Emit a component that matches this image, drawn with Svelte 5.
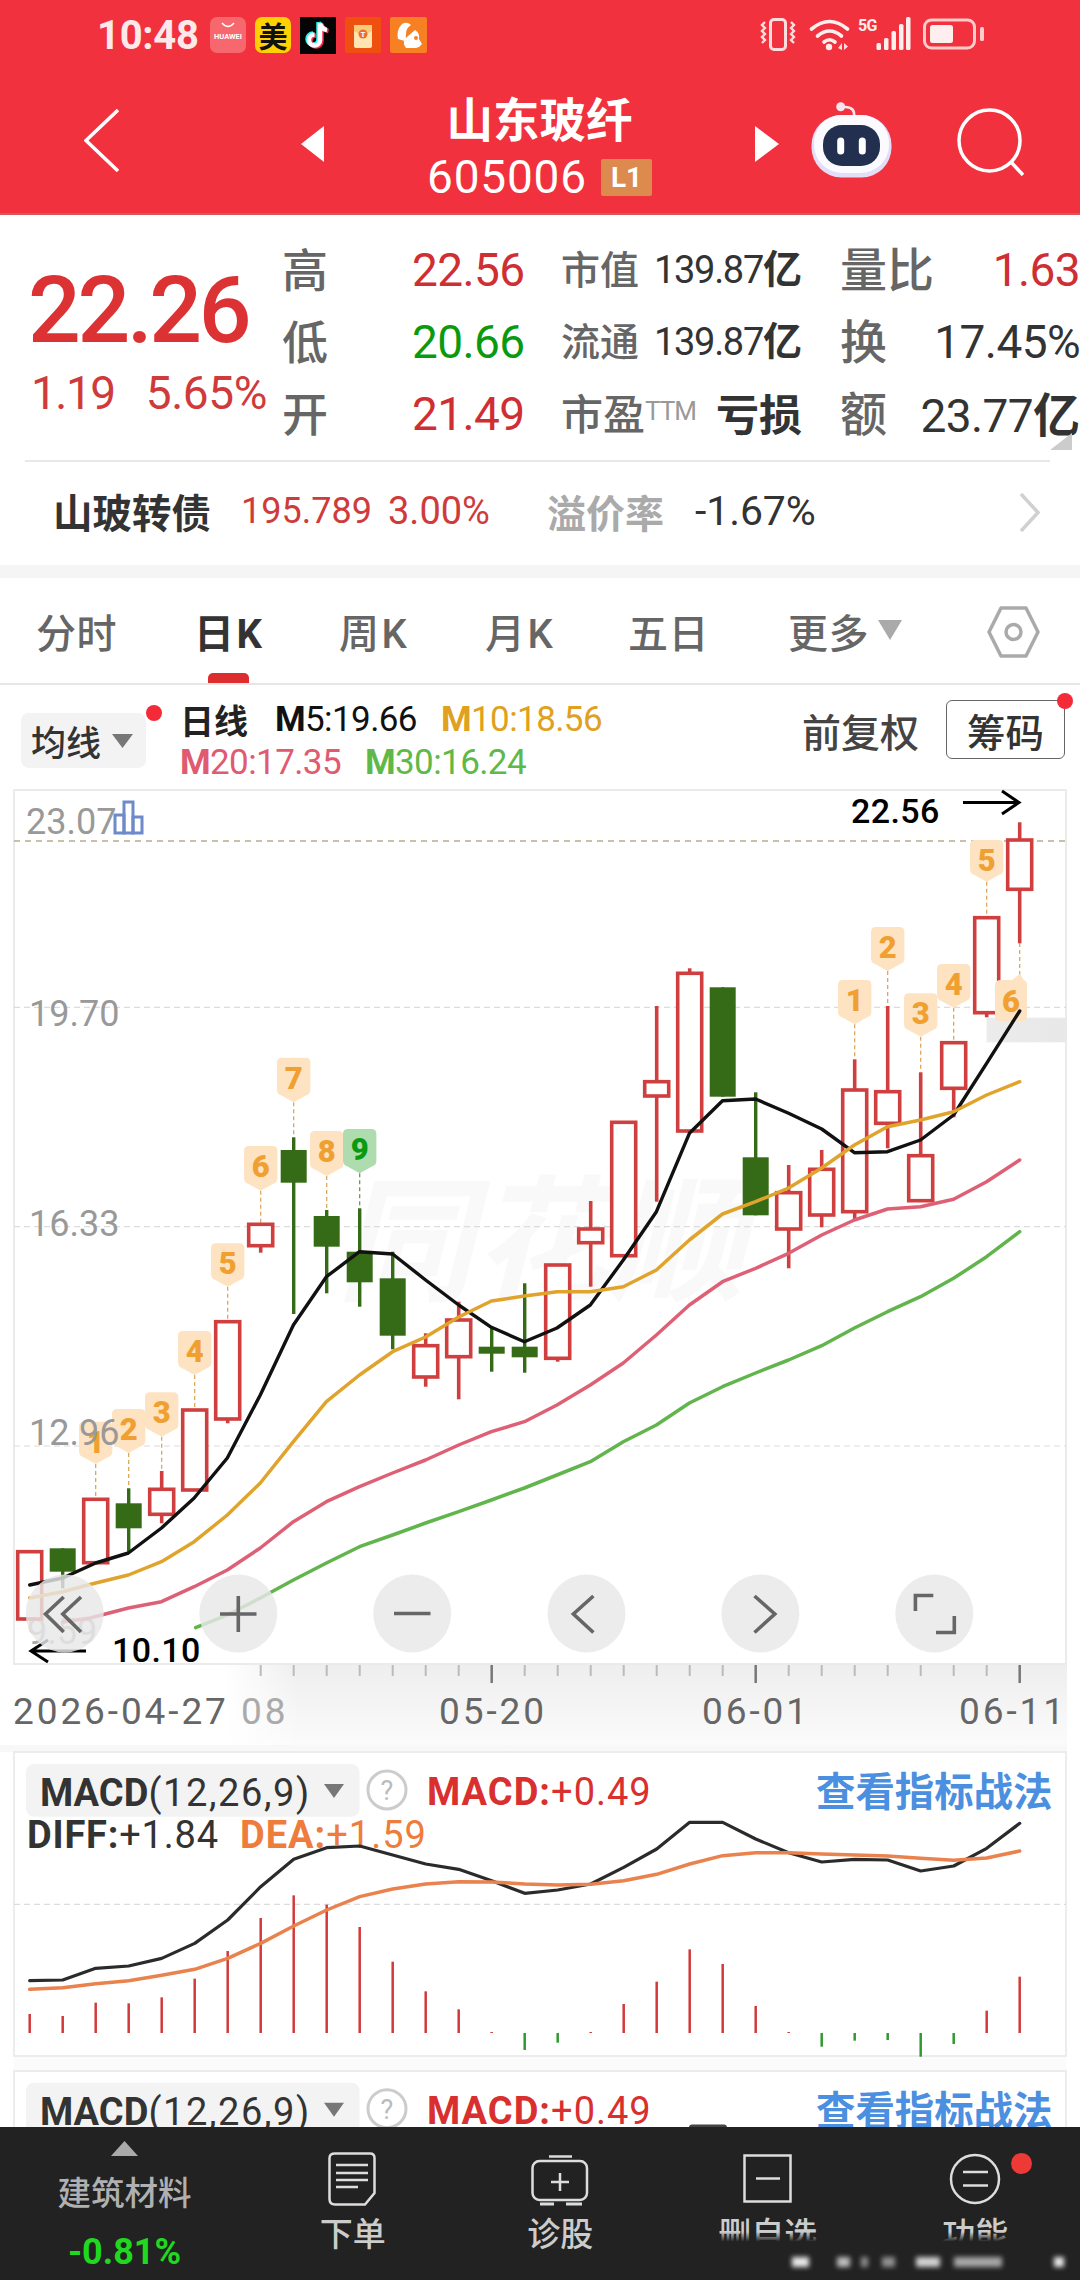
<script>
  const X = (i) => 29.7 + 33 * i;
  const candles = [
    ['r',1551.7,1551.7,1619,1619],['g',1548.3,1548.3,1571.7,1588.3],['r',1499.3,1499.3,1562.7,1562.7],['g',1488.3,1503.3,1528.3,1551.7],
    ['r',1471,1489.3,1514.3,1523.3],['r',1410,1410,1490,1490],['r',1321.7,1321.7,1419,1423.3],['r',1224.3,1224.3,1245.7,1252.7],
    ['g',1137.3,1150,1182.7,1314],['g',1210,1216,1246.7,1293.3],['g',1208.3,1251.7,1282.3,1306.7],['g',1251.7,1278.3,1335.7,1349.3],
    ['r',1333.3,1345.7,1377,1386.7],['r',1301.7,1320,1356.7,1399.3],['g',1326.7,1346.7,1353.7,1371.7],['g',1283.3,1346.7,1357.3,1372.7],
    ['r',1265,1265,1358.3,1361.7],['r',1201,1229,1242.7,1286.7],['r',1122.3,1122.3,1255.7,1256.7],['r',1006,1081.7,1096,1201.7],
    ['r',968.3,973.3,1131,1131],['g',987.3,987.3,1096.7,1096.7],['g',1092.3,1157.3,1215.3,1215.3],['r',1165,1192.7,1229,1268.3],
    ['r',1150,1169.3,1215,1227.3],['r',1059.3,1090,1211.7,1220],['r',1006,1091.7,1123.3,1148.3],['r',1072.3,1155.7,1200.7,1201.7],
    ['r',1042.7,1042.7,1088.3,1117.3],['r',917.7,917.7,1012.7,1017.3],['r',822.3,840,889.3,943.3]
  ];
  const badges = [
    [2,1421.7,1464,1499.3,'1'],[3,1409,1453,1488.3,'2'],[4,1392.3,1436.7,1471,'3'],[5,1331,1375,1410,'4'],[6,1243.3,1286.7,1321.7,'5'],
    [7,1146,1190.7,1224.3,'6'],[8,1057.7,1102.3,1137.3,'7'],[9,1131,1176,1210,'8'],[10,1129,1173.3,1208.3,'9'],
    [25,980,1024.3,1059.3,'1'],[26,927,971,1006,'2'],[27,993.3,1036.7,1072.3,'3'],[28,964,1007.7,1042.7,'4'],[29,840,881.7,917.7,'5']
  ];
  const badgePath = (cx, t, p) => {
    const l = cx - 16.7, r = cx + 16.7, b = p - 7;
    return `M${l + 5} ${t}H${r - 5}Q${r} ${t} ${r} ${t + 5}V${b - 6}Q${r} ${b - 1} ${r - 4} ${b}L${cx} ${p}L${l + 4} ${b}Q${l} ${b - 1} ${l} ${b - 6}V${t + 5}Q${l} ${t} ${l + 5} ${t}Z`;
  };
  const ma5 = '29.7,1585 62.7,1578 95.7,1563 128.4,1553 161.5,1528 194.2,1498 227.3,1458 260.3,1395 293.4,1325 326.4,1276.7 359.5,1251.7 392.6,1254 425.6,1280 458.7,1305 491.4,1327.3 524.4,1341.7 557,1328 590.3,1305 623.3,1260 656.4,1211.7 689.4,1133.3 722.5,1100.7 755.6,1099 788.6,1113.3 821.7,1129 854.4,1152.7 887.5,1151.7 920.5,1140 953.6,1115 986.6,1063.3 1019.7,1011';
  const ma10 = '29.7,1598 62.7,1591.7 95.7,1583 128.4,1575 161.5,1561.7 194.2,1541.7 227.3,1515 260.3,1483 293.4,1441.7 326.4,1401.7 359.5,1375 392.6,1351.7 425.6,1337 458.7,1317 491.4,1301 524.4,1296 557.2,1291.7 590.3,1291.7 623.3,1286.7 656.4,1270 689.4,1240 722.5,1214 755.6,1201.7 788.6,1188 821.7,1168 854.4,1145 887.5,1126.7 920.5,1120 953.6,1111.7 986.6,1095 1019.7,1081.7';
  const ma20 = '62.7,1622 90,1618 128.4,1608 161.5,1601.7 194.2,1586.7 227.3,1570 260.3,1548 293.4,1521.7 326.4,1501.7 359.5,1486.7 392.6,1473 425.6,1460 458.7,1445 491.4,1431.7 524.4,1421.7 557,1405 590.3,1385 623.3,1363 656.4,1335 689.4,1305 722.5,1281.7 755.6,1268.3 788.6,1253.3 821.7,1235 854.4,1220 887.5,1209 920.5,1206.7 953.6,1199.3 986.6,1181.7 1019.7,1160';
  const ma30 = '195.6,1627.7 227.3,1615 260.3,1598 293.4,1580 326.4,1563 359.5,1546.7 392.6,1535 425.6,1523 458.7,1511.7 491.4,1500 524.4,1488 557,1475 590.3,1461.7 623.3,1441.7 656.4,1425 689.4,1403 722.5,1386.7 755.6,1373 788.6,1360 821.7,1345.7 854.4,1328 887.5,1311.7 920.5,1296.7 953.6,1278.3 986.6,1256.7 1019.7,1231.7';
  const btns = [64.7, 238.3, 412.2, 586.5, 760.4, 934.3];
  const ticks = Array.from({ length: 24 }, (_, k) => k + 7);
  const dy = (z) => 1740 + z / 3;
  const diff = [722,720,685,678,655,610,540,440,358,323,318,345,372,388,422,460,450,432,382,327,247,247,297,338,366,358,360,393,378,325,250];
  const dea = [748,743,731,722,706,688,655,610,558,510,470,447,432,425,426,432,435,433,422,403,372,347,338,338,342,345,348,355,361,354,333];
  const pts = (a) => a.map((z, i) => `${X(i)},${dy(z)}`).join(' ');
  const hist = [['r',822],['r',828],['r',788],['r',790],['r',772],['r',716],['r',633],['r',534],['r',466],['r',494],['r',561],['r',665],['r',754],['r',808],['r',876],
    ['g',2050],['g',2042.7],['r',876],['r',792],['r',725],['r',628],['r',672],['r',798],['r',876],['g',2046.7],['g',2040.7],['g',2040],['g',2056.7],['g',2044],['r',812],['r',710]];
  const smudges = [[792,17,.9],[837,13,.7],[861,7,.5],[882,13,.5],[916,24,.8],[954,48,.6],[1054,10,.9]];
</script>

{#snippet macdHead(off)}
  <rect class="pill" x="26" y={1764 + off} width="333.5" height="52.7" rx="8" />
  <text class="mh" x="40" y={1806 + off}><tspan class="b">MACD</tspan><tspan class="par">(12,26,9)</tspan></text>
  <polygon class="tri" points="{324},{1784 + off} {344},{1784 + off} {334},{1798 + off}" />
  <circle class="help" cx="387" cy={1790 + off} r="19" />
  <text class="helpq" x="387" y={1800 + off}>?</text>
  <text class="mv" x="427" y={1805 + off}><tspan class="b">MACD:</tspan>+0.49</text>
  <text class="zhan" x="816" y={1806 + off}>查看指标战法</text>
{/snippet}

<div class="page">
  <header class="top">
    <div class="status">
      <span class="time">10:48</span>
      <div class="apps">
        <div class="app huawei">
          <svg viewBox="0 0 36 35" width="36" height="35"><path d="M12 6q6 7 12 0" fill="none" stroke="#fff" stroke-width="1.3" /></svg>
          <span>HUAWEI</span>
        </div>
        <div class="app mei">美</div>
        <div class="app tik">
          <svg viewBox="0 0 36 36" width="36" height="36">
            <g fill="none" stroke-width="4.5">
              <path d="M20 6v17a5.5 5.5 0 1 1-5.5-5.5M20 6c.8 4 3.6 6.5 7 7" stroke="#25f4ee" transform="translate(-1.5 -1)" />
              <path d="M20 6v17a5.5 5.5 0 1 1-5.5-5.5M20 6c.8 4 3.6 6.5 7 7" stroke="#fe2c55" transform="translate(1.5 1)" />
              <path d="M20 6v17a5.5 5.5 0 1 1-5.5-5.5M20 6c.8 4 3.6 6.5 7 7" stroke="#fff" />
            </g>
          </svg>
        </div>
        <div class="app env">
          <svg viewBox="0 0 36 36" width="36" height="36">
            <rect x="9" y="8" width="18" height="23" rx="2" fill="#ffe6b0" />
            <path d="M9 8h18v6q-9 7-18 0z" fill="#fbc97a" />
            <circle cx="18" cy="17" r="4.5" fill="#e8722a" />
            <text x="18" y="20" class="envt">T</text>
          </svg>
        </div>
        <div class="app org">
          <svg viewBox="0 0 37 36" width="37" height="36">
            <path d="M8 22q-2-9 4-15 5-3 9 1-5 3-5 9-1 5 2 8z" fill="#fff" />
            <path d="M16 31q-5-6 1-11l8-7q5 3 4 9l3 5q-2 3-6 4z" fill="#fff" />
            <circle cx="26" cy="21" r="2" fill="#f78022" />
          </svg>
        </div>
      </div>
      <svg class="sys" viewBox="755 15 235 45" width="235" height="45">
        <rect x="770.5" y="21.5" width="15" height="30" rx="3.5" fill="none" stroke="#fdd" stroke-width="3" />
        <path d="M765 24l-3 3 3 3-3 3 3 3-3 3 3 3-3 3M791 24l3 3-3 3 3 3-3 3 3 3-3 3 3 3" fill="none" stroke="#fdd" stroke-width="2.4" />
        <g fill="none" stroke="#fee" stroke-linecap="round">
          <path d="M811.5 31q18-15 36 0" stroke-width="3.6" />
          <path d="M817.5 38q12-10 24 0" stroke-width="3.6" />
          <path d="M824 44q5.500-4.500 11 0" stroke-width="3.6" />
        </g>
        <circle cx="829" cy="49" r="3.200" fill="#fee" />
        <path d="M838 50l4-5v7M844 45v7l4-3.500z" fill="#fdd" />
        <text class="fiveg" x="858" y="33">5G</text>
        <g fill="#fee">
          <rect x="876.500" y="45" width="4.500" height="7" rx="1.500" /><rect x="884" y="40" width="4.500" height="12" rx="1.500" />
          <rect x="891.500" y="33" width="4.500" height="19" rx="1.500" /><rect x="899" y="26" width="4.500" height="26" rx="1.500" /><rect x="906" y="19" width="4.500" height="33" rx="1.500" />
        </g>
        <rect x="924.500" y="22" width="50" height="28" rx="7" fill="none" stroke="#fcc" stroke-width="3" />
        <rect x="930" y="27" width="23" height="18" rx="2.500" fill="#fee" />
        <rect x="980" y="29" width="4" height="14" rx="1.500" fill="#fcc" />
      </svg>
    </div>
    <nav class="nav">
      <svg class="back" viewBox="0 0 35 63" width="35" height="63"><path d="M34 1L2 31.5L34 62" fill="none" stroke="#fff" stroke-width="3.5" /></svg>
      <svg class="prev" viewBox="0 0 23 36" width="23" height="36"><polygon points="23,0 0,18 23,36" fill="#fff" /></svg>
      <div class="title">
        <div class="name">山东玻纤</div>
        <div class="code"><span>605006</span><b>L1</b></div>
      </div>
      <svg class="next" viewBox="0 0 24 36" width="24" height="36"><polygon points="0,0 24,18 0,36" fill="#fff" /></svg>
      <svg class="robot" viewBox="811 100 82 80" width="82" height="80">
        <path d="M855 116q1-9-9-9" fill="none" stroke="#f6e6f0" stroke-width="2.600" />
        <circle cx="841.700" cy="106.700" r="4.500" fill="#f7e4ee" />
        <rect x="812.500" y="115" width="80" height="62.500" rx="30" fill="#e2def8" />
        <rect x="815" y="115" width="75" height="58" rx="28" fill="#fafaff" />
        <rect x="824" y="125" width="57" height="41" rx="19" fill="#232f4e" />
        <rect x="838.200" y="137.500" width="7" height="17" rx="3.500" fill="#fff" />
        <rect x="859.800" y="137.500" width="7" height="17" rx="3.500" fill="#fff" />
      </svg>
      <svg class="search" viewBox="958 108 68 68" width="68" height="68">
        <circle cx="990.500" cy="140.500" r="30.500" fill="none" stroke="#fff" stroke-width="3.500" />
        <path d="M1012 162L1024 175" stroke="#fff" stroke-width="3.500" />
      </svg>
    </nav>
  </header>

  <section class="quote">
    <div class="grid">
      <div class="left">
        <div class="price">22.26</div>
        <div class="chg"><span>1.19</span><span>5.65%</span></div>
      </div>
      <div class="lab">高</div><div class="val up">22.56</div>
      <div class="cell"><span class="k">市值</span><span class="nb">139.87<b>亿</b></span></div>
      <div class="cell wide"><span class="k2">量比</span><span class="val up">1.63</span></div>

      <div class="lab">低</div><div class="val dn">20.66</div>
      <div class="cell"><span class="k">流通</span><span class="nb">139.87<b>亿</b></span></div>
      <div class="cell wide"><span class="k2">换</span><span class="val dark">17.45%</span></div>

      <div class="lab">开</div><div class="val up">21.49</div>
      <div class="cell"><span class="k k3">市盈<small>TTM</small></span><b class="loss">亏损</b></div>
      <div class="cell wide"><span class="k2">额</span><span class="val dark">23.77<b>亿</b></span></div>
    </div>
    <svg class="corner" viewBox="0 0 22 17" width="22" height="17"><polygon points="0,17 22,17 22,0" fill="#ccc" /></svg>
    <div class="sep"></div>
    <div class="bond">
      <span class="bname">山玻转债</span>
      <span class="bnum">195.789</span>
      <span class="bpct">3.00%</span>
      <span class="bk">溢价率</span>
      <span class="bv">-1.67%</span>
      <svg class="chev" viewBox="0 0 21 39" width="21" height="39"><path d="M2 1L19 19.5L2 38" fill="none" stroke="#d0d0d0" stroke-width="3.500" /></svg>
    </div>
  </section>

  <div class="gap"></div>

  <section class="tabs">
    <span class="tab t1">分时</span>
    <span class="tab on kk">日K</span>
    <span class="tab kk">周K</span>
    <span class="tab kk">月K</span>
    <span class="tab">五日</span>
    <span class="tab">更多</span>
    <svg class="more" viewBox="0 0 24 20" width="24" height="20"><polygon points="0,0 24,0 12,20" fill="#aaa" /></svg>
    <svg class="hex" viewBox="0 0 53 52" width="53" height="52">
      <polygon points="14,2 39,2 51,26 39,50 14,50 2,26" fill="none" stroke="#aaa" stroke-width="3.500" stroke-linejoin="round" />
      <circle cx="26.500" cy="26" r="7.500" fill="none" stroke="#aaa" stroke-width="3.500" />
    </svg>
    <i class="under"></i>
  </section>

  <section class="mahead">
    <div class="ma-pill"><span>均线</span><svg viewBox="0 0 21 14" width="21" height="14"><polygon points="0,0 21,0 10.500,14" fill="#777" /></svg><i class="dot d1"></i></div>
    <div class="ma-vals">
      <div class="ma-row r1"><b class="rx">日线</b><span class="c0"><b>M</b>5:19.66</span><span class="c1"><b>M</b>10:18.56</span></div>
      <div class="ma-row r2"><span class="c2"><b>M</b>20:17.35</span><span class="c3"><b>M</b>30:16.24</span></div>
    </div>
    <span class="fq">前复权</span>
    <div class="chip">筹码<i class="dot d2"></i></div>
  </section>

  <svg class="chart" viewBox="0 789 1080 956" width="1080" height="956">
    <defs>
      <linearGradient id="band" x1="0" y1="0" x2="0" y2="1"><stop offset="0" stop-color="#eeeeee" /><stop offset="1" stop-color="#fbfbfb" /></linearGradient>
      <linearGradient id="whiteL" x1="0" y1="0" x2="1" y2="0"><stop offset=".75" stop-color="#fff" /><stop offset="1" stop-color="#fff" stop-opacity="0" /></linearGradient>
      <linearGradient id="greyR" x1="0" y1="0" x2="1" y2="0"><stop offset="0" stop-color="#e8e8e8" stop-opacity=".85" /><stop offset="1" stop-color="#e8e8e8" /></linearGradient>
    </defs>
    <rect x="0" y="1664" width="1067" height="81" fill="url(#band)" />
    <rect x="0" y="1664" width="300" height="81" fill="url(#whiteL)" />
    <rect x="14" y="790" width="1052" height="874" fill="#fff" stroke="#ebebeb" stroke-width="2" />
    <text class="wm" x="337" y="1290">同花顺</text>
    <line x1="14" y1="1007.3" x2="1066" y2="1007.3" class="grid-l" />
    <line x1="14" y1="1226.7" x2="1066" y2="1226.7" class="grid-l" />
    <line x1="14" y1="1446" x2="1066" y2="1446" class="grid-l" />
    <line x1="14" y1="841" x2="1066" y2="841" class="grid-top" />
    <g fill="none" stroke="#6f8acb" stroke-width="3">
      <rect x="115" y="815" width="9" height="18" /><rect x="124" y="802" width="9" height="31" /><rect x="133" y="817" width="9" height="16" />
    </g>
    <rect x="986.600" y="1017.700" width="80" height="24.600" fill="url(#greyR)" />

    {#each badges as b}
      <line x1={X(b[0])} x2={X(b[0])} y1={b[2]} y2={b[3]} class={b[0] === 10 ? 'dash dg' : 'dash'} />
      <path d={badgePath(X(b[0]), b[1], b[2])} class={b[0] === 10 ? 'bd bg' : 'bd'} />
      <text x={X(b[0])} y={b[1] + 31} class={b[0] === 10 ? 'bn gn' : 'bn'}>{b[4]}</text>
    {/each}
    <line x1="1019.700" x2="1019.700" y1="943" y2="982" class="dash" />

    <text class="ax" x="26" y="834">23.07</text>
    <text class="ax" x="29" y="1026">19.70</text>
    <text class="ax" x="29" y="1235.500">16.33</text>
    <text class="ax" x="29" y="1445">12.96</text>
    <text class="ax pale" x="27" y="1644">9.59</text>

    {#each candles as c, i}
      {#if c[0] === 'r'}
        <line x1={X(i)} x2={X(i)} y1={c[1]} y2={c[2]} class="wr" />
        <line x1={X(i)} x2={X(i)} y1={c[3]} y2={c[4]} class="wr" />
        <rect x={X(i) - 12} y={c[2]} width="24" height={c[3] - c[2]} class="br" />
      {:else}
        <line x1={X(i)} x2={X(i)} y1={c[1]} y2={c[4]} class="wg" />
        <rect x={X(i) - 13} y={c[2]} width="26" height={c[3] - c[2]} class="bgr" />
      {/if}
    {/each}

    <path d="M1001 980H1022Q1027 980 1027 985V1016Q1027 1021 1022 1021H1000Q995 1021 995 1016V985Q995 980 1001 980Z" class="bd" />
    <path d="M1012 980L1019.700 974L1024 980Z" class="bd" />
    <text x="1011" y="1012" class="bn">6</text>

    <polyline points={ma20} class="l pink" />
    <polyline points={ma30} class="l green" />
    <polyline points={ma5} class="l black" />
    <polyline points={ma10} class="l gold" />

    <text class="hi" x="851" y="822.500">22.56</text>
    <path d="M963 802.500H1018M1002 791L1019 802.500L1002 814" fill="none" stroke="#000" stroke-width="3" />
    <text class="hi" x="112" y="1661.500">10.10</text>
    <path d="M86 1651H31M48 1640L31 1651L48 1662" fill="none" stroke="#000" stroke-width="3" />

    {#each btns as x}
      <circle cx={x} cy="1613.500" r="39" class="cb" />
    {/each}
    <g fill="none" stroke="#666" stroke-width="3.600">
      <path d="M63.700 1597L45.500 1614L63.700 1632M81 1597L62.800 1614L81 1632" />
      <path d="M220 1614H256.500M238.300 1596V1632" />
      <path d="M394 1613.500H430.500" />
      <path d="M593.400 1596L573.400 1614L593.400 1632.500" />
      <path d="M754.500 1596L774.800 1614L754.500 1632.500" />
      <path d="M915.400 1611V1595.500H933.300M936 1632.500H954.300V1616" />
    </g>

    {#each ticks as k}
      <line x1={X(k)} x2={X(k)} y1="1665" y2={k === 14 || k === 22 || k === 30 ? 1683 : 1676} class={k === 14 || k === 22 || k === 30 ? 'tk big' : 'tk'} />
    {/each}
    <text class="dt" x="13" y="1724">2026-04-27</text>
    <text class="dt dt08" x="241" y="1724">08</text>
    <text class="dt" x="439" y="1724">05-20</text>
    <text class="dt" x="702" y="1724">06-01</text>
    <text class="dt" x="959" y="1724">06-11</text>
  </svg>

  <svg class="macd" viewBox="0 1745 1080 382" width="1080" height="382">
    <rect x="0" y="1745" width="1080" height="382" fill="#fff" />
    <rect x="0" y="1745" width="1067" height="7" fill="#f8f8f8" />
    <rect x="14" y="1752" width="1052" height="304" fill="#fff" stroke="#ececec" stroke-width="2" />
    <rect x="14" y="2057" width="1052" height="13" fill="#fbfbfb" />
    <rect x="14" y="2071" width="1052" height="80" fill="#fff" stroke="#ececec" stroke-width="2" />
    <line x1="14" x2="1066" y1="1904.300" y2="1904.300" class="grid-l" />
    {@render macdHead(0)}
    <text class="df" x="27" y="1848"><tspan class="b">DIFF:</tspan>+1.84</text>
    <text class="de" x="240" y="1848"><tspan class="b">DEA:</tspan>+1.59</text>
    {#each hist as h, i}
      {#if h[0] === 'r'}
        <line x1={X(i)} x2={X(i)} y1={dy(h[1])} y2="2033" class="hr" />
      {:else}
        <line x1={X(i)} x2={X(i)} y1="2033" y2={h[1]} class="hg" />
      {/if}
    {/each}
    <polyline points={pts(diff)} class="l dfl" />
    <polyline points={pts(dea)} class="l del" />
    {@render macdHead(318.7)}
    <rect x="689" y="2124.500" width="38" height="6" rx="3" fill="#444" />
  </svg>

  <footer class="bar">
    <div class="it first">
      <svg viewBox="0 0 27 15" width="27" height="15"><polygon points="13.500,0 27,15 0,15" fill="#aaa" /></svg>
      <span class="sect">建筑材料</span>
      <span class="pctg">-0.81%</span>
    </div>
    <div class="it">
      <svg viewBox="320 2146 66 64" width="66" height="64" fill="none" stroke="#ddd" stroke-width="2.500">
        <path d="M335 2153.500H370Q374.500 2153.500 374.500 2158V2193L365 2204.500H335Q329.500 2204.500 329.500 2199V2158Q329.500 2153.500 335 2153.500Z" />
        <path d="M336 2165H368M336 2173H368M336 2180H368M336 2187H358" />
      </svg>
      <span class="ll">下单</span>
    </div>
    <div class="it">
      <svg viewBox="527 2146 66 64" width="66" height="64" fill="none" stroke="#ddd" stroke-width="2.500">
        <path d="M549 2156.500H572" />
        <rect x="532.500" y="2161" width="54.500" height="39" rx="7" />
        <path d="M560 2173V2191M551 2182H569" />
        <path d="M540 2204H554M566 2204H582" stroke-width="3" />
      </svg>
      <span class="ll">诊股</span>
    </div>
    <div class="it">
      <svg viewBox="735 2146 66 64" width="66" height="64" fill="none" stroke="#ddd" stroke-width="2.500">
        <rect x="744.500" y="2155.500" width="46" height="46" />
        <path d="M756 2178.500H780" />
      </svg>
      <span class="ll">删自选</span>
    </div>
    <div class="it">
      <svg viewBox="943 2146 66 64" width="66" height="64" fill="none" stroke="#ddd" stroke-width="2.500">
        <circle cx="976" cy="2179" r="24" />
        <path d="M964 2172H989M964 2185.500H989" />
      </svg>
      <span class="ll">功能</span>
      <i class="fdot"></i>
    </div>
    <div class="blur"></div>
    <svg class="smudge" viewBox="780 2250 300 30" width="300" height="30">
      {#each smudges as s}
        <rect x={s[0]} y="2257" width={s[1]} height="10" fill="#fff" opacity={s[2]} />
      {/each}
    </svg>
  </footer>
</div>

<style>
  :global(body) { margin: 0; background: #fff; overflow: hidden; }
  .page { width: 1080px; height: 2280px; overflow: hidden; position: relative; background: #fff; font-family: Roboto, "Noto Sans CJK SC", sans-serif; }
  svg { display: block; }
  .top { height: 215px; box-sizing: border-box; background: #f1313d; border-bottom: 2px solid #d9545b; color: #fff; }
  .status { height: 70px; display: flex; align-items: center; padding-left: 97px; position: relative; }
  .time { font-size: 40px; font-weight: 700; width: 113px; letter-spacing: -.3px; color: #fde9ea; }
  .apps { display: flex; gap: 9px; }
  .app { width: 36px; height: 36px; display: flex; align-items: center; justify-content: center; border-radius: 3px; position: relative; overflow: hidden; }
  .huawei { background: #f6686e; border-radius: 7px; }
  .huawei svg { position: absolute; top: 0; left: 0; }
  .huawei span { font-size: 7.500px; font-weight: 700; color: #fff; margin-top: 4px; }
  .mei { background: #ffd100; color: #111; font-size: 29px; line-height: 36px; font-weight: 700; border-radius: 7px; font-family: "Noto Sans CJK SC", sans-serif; }
  .tik { background: #050505; border-radius: 0; height: 37px; }
  .env { background: #f0500f; border-radius: 2px; }
  .envt { font-size: 8px; font-weight: 700; fill: #fff; text-anchor: middle; }
  .org { background: #f78022; width: 37px; border-radius: 2px; }
  .sys { margin-left: auto; margin-right: 90px; }
  .fiveg { font-size: 16px; font-weight: 700; fill: #fee; letter-spacing: -.8px; }
  .nav { height: 143px; display: flex; align-items: flex-start; padding-left: 84px; }
  .back { margin-top: 39px; }
  .prev { margin-left: 182px; margin-top: 56px; }
  .next { margin-top: 56px; }
  .title { width: 431px; display: flex; flex-direction: column; align-items: center; }
  .name { font-size: 46.500px; font-weight: 700; line-height: 50px; margin-top: 22px; font-family: "Noto Sans CJK SC", sans-serif; }
  .code { display: flex; align-items: center; margin-top: 16px; height: 38px; }
  .code span { font-size: 46px; letter-spacing: .8px; line-height: 38px; width: 174px; }
  .code b { width: 51px; height: 37px; background: #dd8a4e; border-radius: 2px; font-size: 28px; line-height: 37px; text-align: center; }
  .robot { margin-left: 31px; margin-top: 30px; }
  .search { margin-left: 65px; margin-top: 38px; }

  .quote { height: 350px; position: relative; }
  .grid { display: grid; grid-template-columns: 253px 128px 110px 280px 278px; grid-template-rows: repeat(3, 72px); padding: 19px 0 0 31px; position: relative; }
  .left { grid-row: 1 / 4; position: relative; }
  .price { font-size: 93px; letter-spacing: -3.400px; color: #dc3234; line-height: 93px; margin-top: 30px; font-weight: 500; margin-left: -3px; }
  .chg { display: flex; gap: 31px; font-size: 46px; color: #cf3b3b; margin-top: 11px; line-height: 50px; letter-spacing: -.4px; }
  .chg span:first-child { letter-spacing: -1.500px; }
  .lab { font-size: 46px; color: #666; font-weight: 500; line-height: 66px; margin-left: -2px; font-family: "Noto Sans CJK SC", sans-serif; }
  .val { font-size: 46px; line-height: 72px; letter-spacing: -.6px; white-space: nowrap; }
  .up { color: #cf2f33; } .dn { color: #0a9a10; } .dark { color: #333; }
  .cell { display: flex; justify-content: space-between; align-items: center; margin-left: 39px; line-height: 72px; height: 72px; }
  .wide { margin-left: 38px; }
  .k { font-size: 39px; line-height: 66px; margin-bottom: 6px; color: #666; font-family: "Noto Sans CJK SC", sans-serif; font-weight: 500; white-space: nowrap; }
  .k3 { font-size: 42px; }
  .k3 small { font-size: 26px; color: #999; letter-spacing: -1px; vertical-align: 10px; font-family: Roboto, sans-serif; font-weight: 400; }
  .k2 { font-size: 47px; line-height: 66px; margin-bottom: 6px; color: #666; font-weight: 500; font-family: "Noto Sans CJK SC", sans-serif; }
  .nb { font-size: 38px; line-height: 68px; margin-bottom: 4px; letter-spacing: -1.300px; color: #333; white-space: nowrap; }
  .nb b { font-size: 39px; letter-spacing: 0; font-family: "Noto Sans CJK SC", sans-serif; }
  .val b { font-size: 47px; letter-spacing: 0; font-family: "Noto Sans CJK SC", sans-serif; }
  .loss { font-size: 43px; line-height: 68px; margin-bottom: 4px; color: #333; font-family: "Noto Sans CJK SC", sans-serif; }
  .corner { position: absolute; right: 8px; top: 218px; }
  .sep { margin: 10px 30px 0 25px; height: 2px; background: #e8e8e8; }
  .bond { height: 102px; box-sizing: border-box; padding-bottom: 5px; display: flex; align-items: center; padding-left: 53px; position: relative; }
  .bname { font-size: 39.500px; font-weight: 700; color: #333; font-family: "Noto Sans CJK SC", sans-serif; width: 188px; }
  .bnum { font-size: 36px; color: #cf3b3b; width: 147px; }
  .bpct { font-size: 38px; color: #cf3b3b; width: 159px; }
  .bk { font-size: 39px; color: #aaa; font-weight: 700; font-family: "Noto Sans CJK SC", sans-serif; width: 148px; }
  .bv { font-size: 41px; color: #333; letter-spacing: -.1px; }
  .chev { position: absolute; left: 1019px; top: 31px; }
  .gap { height: 13px; background: #f5f5f5; }

  .tabs { height: 107px; box-sizing: border-box; border-bottom: 2px solid #e6e6e6; display: grid; grid-template-columns: 36px 158px 145px 146px 143px 160px 90px 97px 53px; align-items: center; position: relative; }
  .tab { font-size: 40px; color: #666; font-weight: 500; font-family: Roboto, "Noto Sans CJK SC", sans-serif; white-space: nowrap; letter-spacing: .6px; }
  .kk { letter-spacing: 2.500px; }
  .t1 { grid-column: 2; }
  .on { color: #333; font-weight: 700; }
  .more { grid-column: 8; margin-top: -1px; }
  .hex { position: absolute; left: 987px; top: 28px; }
  .under { position: absolute; left: 208px; top: 95px; width: 41px; height: 10px; background: #dc2e2e; border-radius: 5px 5px 0 0; }

  .mahead { height: 104px; display: flex; position: relative; padding-left: 21px; box-sizing: border-box; }
  .ma-pill { width: 125px; height: 55px; margin-top: 28px; background: #f3f3f3; border-radius: 8px; display: flex; align-items: center; padding-left: 10px; box-sizing: border-box; gap: 11px; position: relative; }
  .ma-pill span { font-size: 35px; color: #333; font-weight: 500; font-family: "Noto Sans CJK SC", sans-serif; }
  .dot { position: absolute; width: 16px; height: 16px; border-radius: 50%; background: #f42a38; }
  .d1 { left: 125px; top: -8px; }
  .ma-vals { margin-left: 34px; display: flex; flex-direction: column; }
  .ma-row { display: flex; font-size: 35px; letter-spacing: -.6px; white-space: nowrap; height: 46px; align-items: center; }
  .r1 { margin-top: 11px; }
  .r2 { margin-top: -3px; }
  .rx { font-size: 34px; color: #222; letter-spacing: 0; width: 95px; font-family: "Noto Sans CJK SC", sans-serif; }
  .c0 { color: #111; width: 166px; } .c1 { color: #e0a020; }
  .c2 { color: #e05a70; width: 185px; } .c3 { color: #5fb948; }
  .fq { position: absolute; left: 802px; top: 22px; font-size: 39px; line-height: 47px; font-weight: 500; color: #444; font-family: "Noto Sans CJK SC", sans-serif; }
  .chip { position: absolute; left: 946px; top: 15px; width: 119px; height: 59px; border: 1.500px solid #666; border-radius: 6px; box-sizing: border-box; display: flex; align-items: center; justify-content: center; font-size: 38.500px; color: #333; font-weight: 500; font-family: "Noto Sans CJK SC", sans-serif; }
  .d2 { right: -9px; top: -8px; }

  .wm { font-size: 136px; font-weight: 700; font-style: italic; fill: #f9f9f9; font-family: "Noto Sans CJK SC", sans-serif; }
  .grid-l { stroke: #dcdcdc; stroke-width: 1.200; stroke-dasharray: 6 4; }
  .grid-top { stroke: #b9ac8e; stroke-width: 1.500; stroke-dasharray: 6 5; }
  .ax { font-size: 36px; fill: #999; font-weight: 400; }
  .pale { fill: #aaa; }
  .dash { stroke: #d9a050; stroke-width: 1.200; stroke-dasharray: 4 3; }
  .dg { stroke: #6a8a40; }
  .bd { fill: #fde3c2; }
  .bg { fill: #afdcae; }
  .bn { font-size: 31px; font-weight: 900; fill: #f0a030; text-anchor: middle; }
  .gn { fill: #0a9a10; }
  .wr { stroke: #cf3f3f; stroke-width: 3.600; }
  .br { fill: #fff; stroke: #cf3f3f; stroke-width: 3.600; }
  .wg { stroke: #356b16; stroke-width: 3.400; }
  .bgr { fill: #356b16; }
  .l { fill: none; stroke-linejoin: round; stroke-linecap: round; }
  .black { stroke: #111; stroke-width: 3.400; }
  .gold { stroke: #e0a32c; stroke-width: 3.500; }
  .pink { stroke: #dd6075; stroke-width: 3.500; }
  .green { stroke: #62b44c; stroke-width: 3.500; }
  .hi { font-size: 34px; font-weight: 500; fill: #000; letter-spacing: .4px; }
  .cb { fill: rgba(232,232,232,.82); }
  .tk { stroke: #bbb; stroke-width: 2; }
  .big { stroke: #777; stroke-width: 2.500; }
  .dt { font-size: 37px; fill: #666; letter-spacing: 2.900px; }
  .dt08 { fill: #aaa; }

  .pill { fill: #f3f3f3; }
  .mh { font-size: 38px; fill: #333; }
  .par { letter-spacing: 1.600px; }
  .b { font-weight: 700; }
  .tri { fill: #777; }
  .help { fill: none; stroke: #ccc; stroke-width: 3; }
  .helpq { font-size: 27px; fill: #bbb; text-anchor: middle; }
  .mv { font-size: 38px; fill: #d9302f; letter-spacing: 1px; }
  .zhan { font-size: 39.400px; font-weight: 700; fill: #4a8fe0; font-family: "Noto Sans CJK SC", sans-serif; }
  .df { font-size: 38px; fill: #333; letter-spacing: .8px; }
  .de { font-size: 38px; fill: #ee7c3c; letter-spacing: 1px; }
  .hr { stroke: #d23a3a; stroke-width: 2.500; }
  .hg { stroke: #2f9a2f; stroke-width: 2.500; }
  .dfl { stroke: #2b2b2b; stroke-width: 3.200; }
  .del { stroke: #e9824d; stroke-width: 3.500; }

  .bar { height: 153px; background: #222; display: grid; grid-template-columns: 249px repeat(4, 207.500px); position: relative; color: #ccc; font-family: "Noto Sans CJK SC", sans-serif; }
  .it { display: flex; flex-direction: column; align-items: center; position: relative; padding-top: 19px; }
  .first { padding-top: 14px; }
  .sect { font-size: 33.500px; color: #b0b0b0; font-weight: 500; line-height: 40px; margin-top: 15px; }
  .pctg { font-size: 36px; font-weight: 700; color: #1fd81f; line-height: 40px; margin-top: 21px; font-family: Roboto, sans-serif; }
  .ll { font-size: 33px; font-weight: 500; color: #ccc; line-height: 40px; margin-top: 2px; }
  .fdot { position: absolute; left: 139.500px; top: 26px; width: 21px; height: 21px; border-radius: 50%; background: #ee3a36; }
  .blur { position: absolute; right: 0; bottom: 0; width: 380px; height: 48px; background: linear-gradient(#22222200, #222 20%); }
  .smudge { position: absolute; right: 0; bottom: 0; filter: blur(2.500px); }
</style>
